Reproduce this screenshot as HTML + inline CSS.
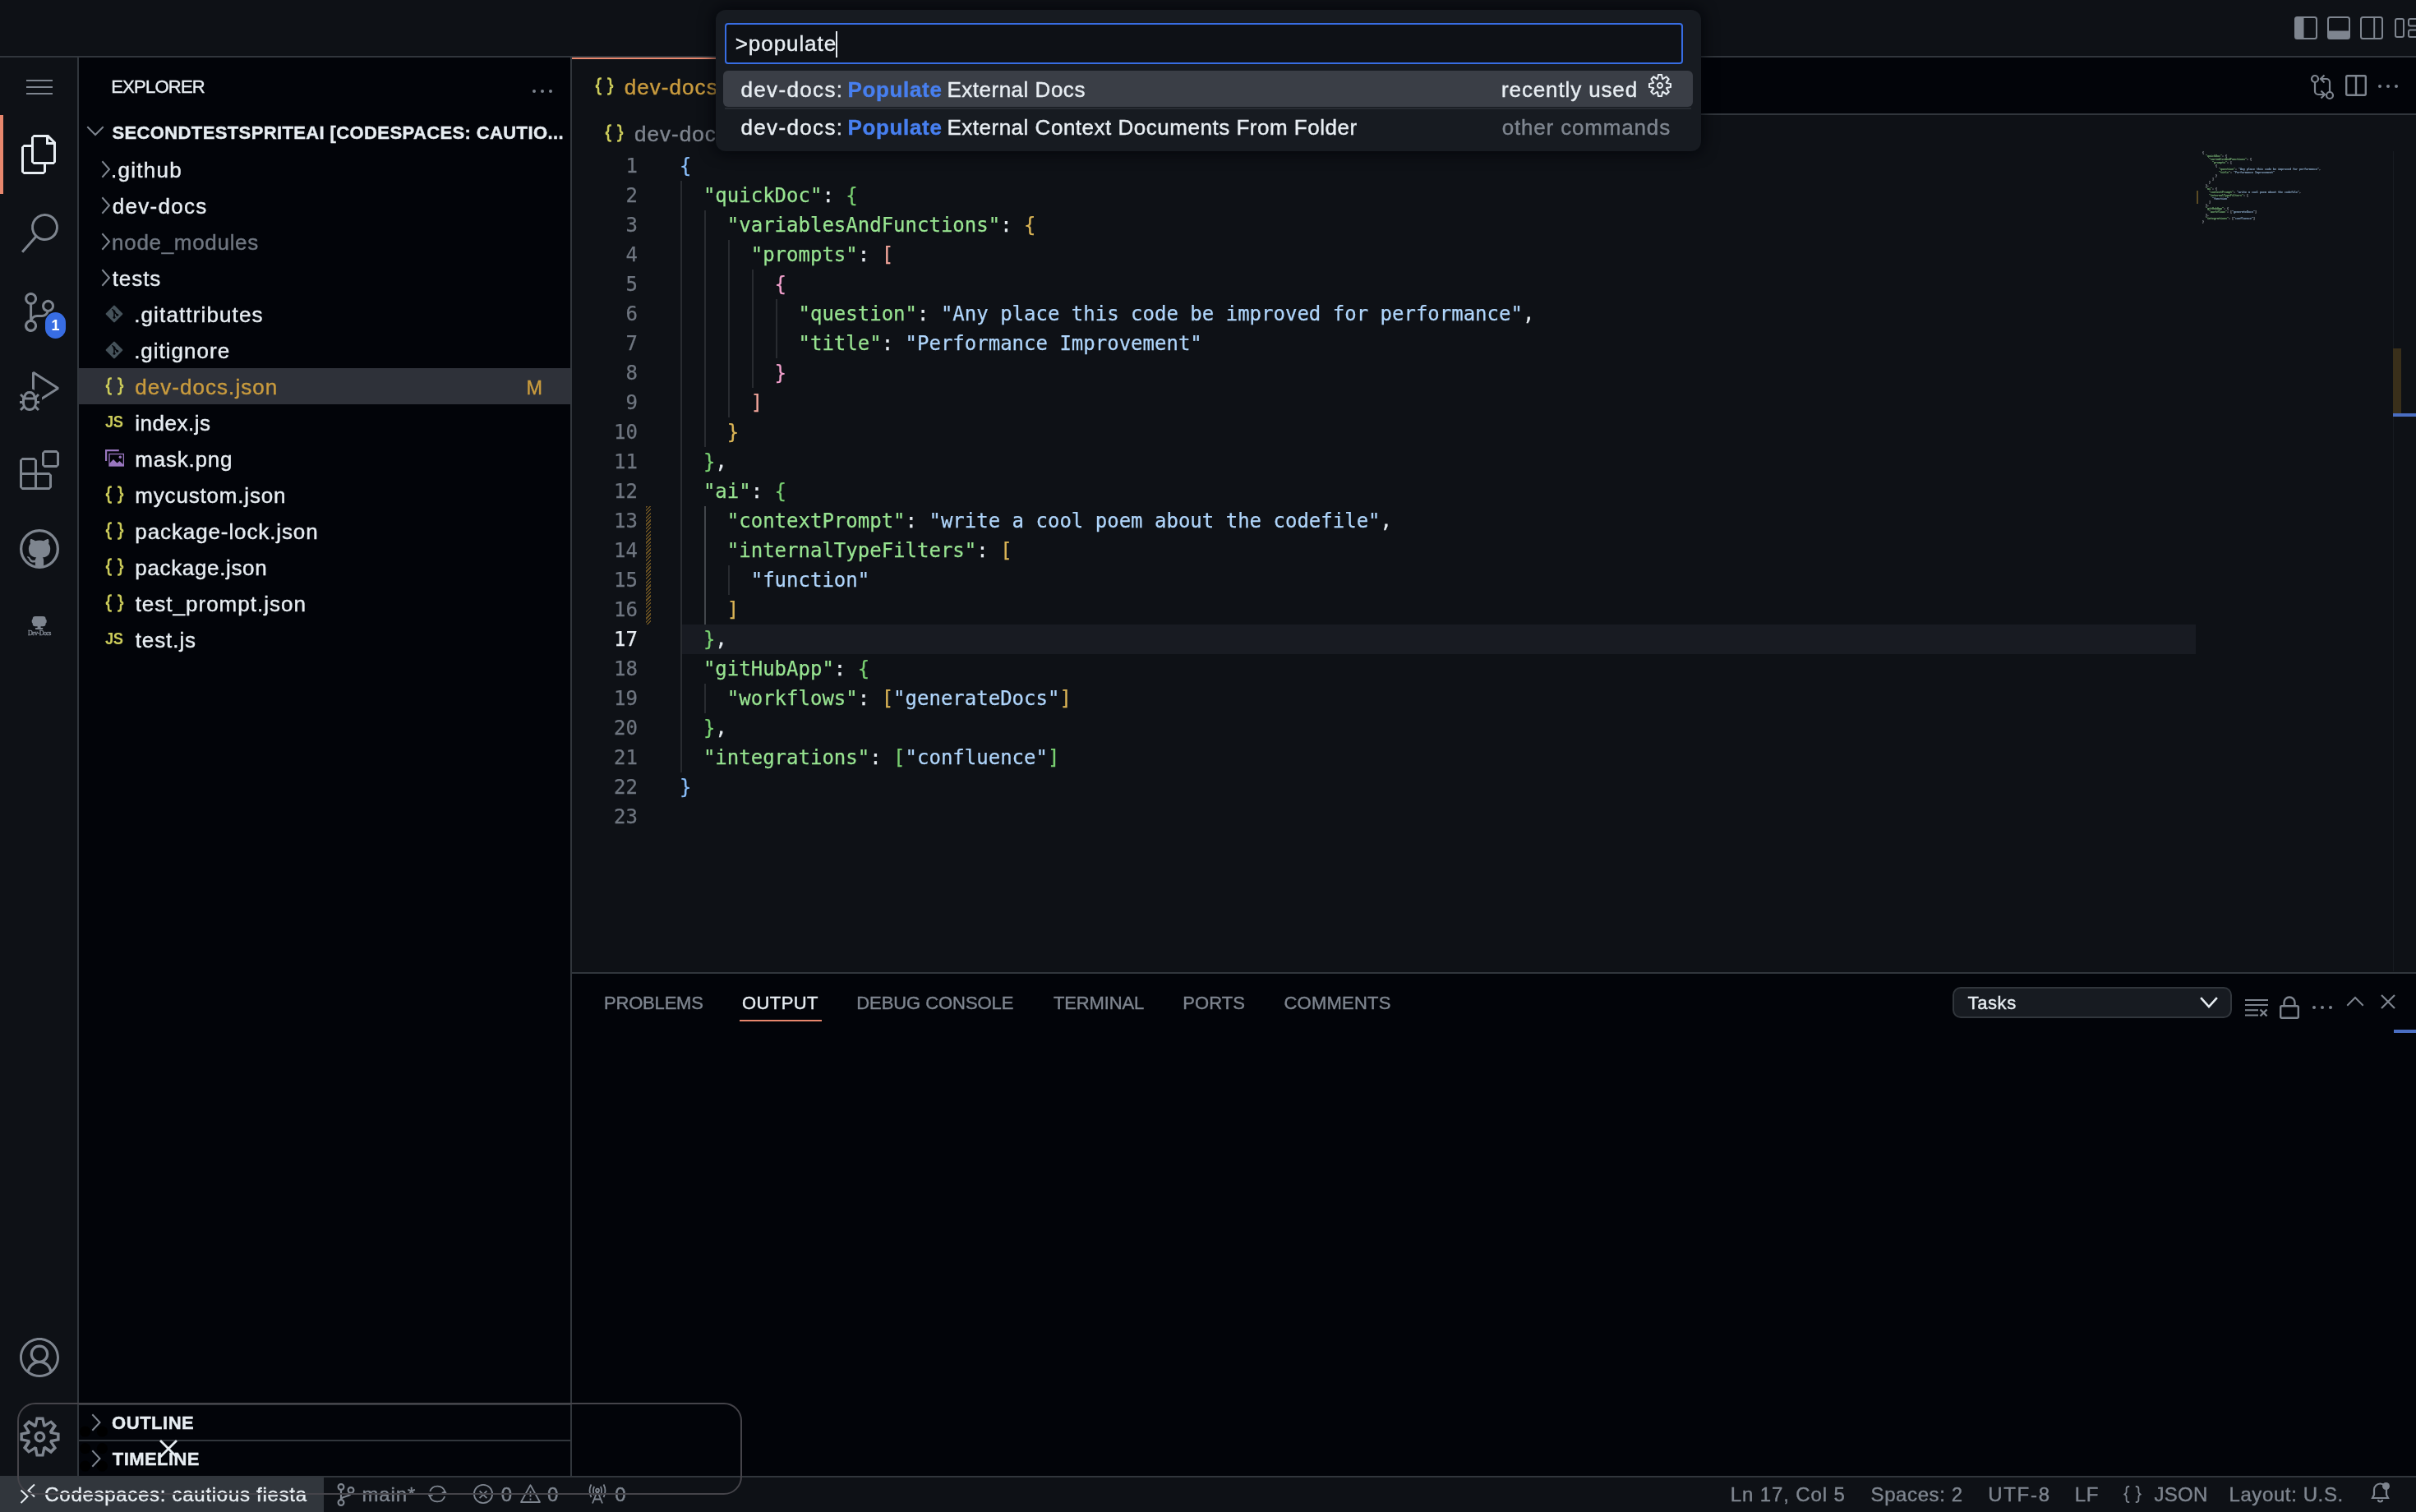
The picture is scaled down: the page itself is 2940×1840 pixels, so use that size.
<!DOCTYPE html>
<html lang="en"><head><meta charset="utf-8"><title>dev-docs.json - secondtestspriteai [Codespaces: cautious fiesta] - Visual Studio Code</title>
<style>
*{box-sizing:border-box;margin:0;padding:0}
html,body{width:2940px;height:1840px;overflow:hidden;background:#0e1116}
body{position:relative;font-family:"Liberation Sans",sans-serif;color:#e7edf2;font-size:26px;-webkit-font-smoothing:antialiased}
.abs{position:absolute}
#root{position:absolute;left:0;top:0;width:2940px;height:1840px;will-change:transform}
svg{display:block;overflow:visible}
#titlebar{left:0;top:0;width:2940px;height:70px;background:#0e1116;border-bottom:2px solid #31363c}
#activity{left:0;top:70px;width:96px;height:1726px;background:#0e1116;border-right:2px solid #31363c}
#sidebar{left:96px;top:70px;width:600px;height:1726px;background:#020409;border-right:2px solid #31363c}
#tabs{left:696px;top:70px;width:2244px;height:70px;background:#020409;border-bottom:2px solid #31363c}
#tab{left:696px;top:70px;width:330px;height:70px;background:#0e1116;border-top:2px solid #e8876d;border-right:2px solid #31363c}
#crumbs{left:696px;top:140px;width:2244px;height:44px;background:#0e1116}
#code{left:696px;top:184px;width:2244px;height:999px;background:#0e1116;font-family:"DejaVu Sans Mono","Liberation Mono",monospace;font-size:24px;line-height:36px;-webkit-text-stroke:0.25px}
#panel{left:696px;top:1183px;width:2244px;height:613px;background:#020409;border-top:2px solid #31363c}
#status{left:0;top:1796px;width:2940px;height:44px;background:#0e1116;border-top:2px solid #31363c;color:#7e858f;font-size:24px}
.row{position:absolute;left:0;width:598px;height:44px;line-height:44px;white-space:nowrap}
.row .lbl{position:absolute;top:0}
.ln{position:absolute;left:0;width:80px;text-align:right;color:#6f7680}
.cl{position:absolute;left:131px;white-space:pre}
.k{color:#98e491}.s{color:#afd5fb}.p{color:#e7edf2}
.b1{color:#89befa}.b2{color:#79d071}.b3{color:#dbb556}.b4{color:#f2a59b}.b5{color:#f1a0cc}
.mm .b1,.mm .b2,.mm .b3,.mm .b4,.mm .b5{color:#e7edf2}
.g{position:absolute;width:2px;background:#282b30}
.g.a{background:#42464b}
.st{position:absolute;top:0;height:42px;line-height:42px;white-space:nowrap}
.pt{position:absolute;top:0;height:70px;line-height:74px;font-size:22px;color:#7e858f;white-space:nowrap}
.t{white-space:nowrap;-webkit-text-stroke:0.4px}</style></head><body>
<div id="root">
<div id="titlebar" class="abs"><svg class="abs" style="left:2792px;top:20px" width="28" height="28" viewBox="0 0 28 28" ><rect x="1" y="1" width="26" height="26" rx="2.500" fill="none" stroke="#7e858f" stroke-width="2"/><path d="M1 3.500 a2.500 2.500 0 0 1 2.500 -2.500 H11.500 V27 H3.500 a2.500 2.500 0 0 1 -2.500 -2.500 Z" fill="#7e858f"/></svg><svg class="abs" style="left:2832px;top:20px" width="28" height="28" viewBox="0 0 28 28" ><rect x="1" y="1" width="26" height="26" rx="2.500" fill="none" stroke="#7e858f" stroke-width="2"/><path d="M1 17.500 H27 V24.500 a2.500 2.500 0 0 1 -2.500 2.500 H3.500 a2.500 2.500 0 0 1 -2.500 -2.500 Z" fill="#7e858f"/></svg><svg class="abs" style="left:2872px;top:20px" width="28" height="28" viewBox="0 0 28 28" ><rect x="1" y="1" width="26" height="26" rx="2.500" fill="none" stroke="#7e858f" stroke-width="2"/><rect x="16.200" y="1" width="2" height="26" fill="#7e858f"/></svg><svg class="abs" style="left:2914px;top:22px" width="30" height="24" viewBox="0 0 30 24" ><rect x="1" y="1" width="10" height="22" rx="2" fill="none" stroke="#7e858f" stroke-width="2"/><rect x="17" y="1" width="12" height="8.500" rx="2" fill="none" stroke="#7e858f" stroke-width="2"/><rect x="17" y="14.500" width="12" height="8.500" rx="2" fill="none" stroke="#7e858f" stroke-width="2"/></svg></div>
<div id="activity" class="abs"><div class="abs" style="left:32px;top:27px;width:32px;height:2px;background:#7e858f"></div><div class="abs" style="left:32px;top:35px;width:32px;height:2px;background:#7e858f"></div><div class="abs" style="left:32px;top:43px;width:32px;height:2px;background:#7e858f"></div><div class="abs" style="left:0;top:70px;width:4px;height:96px;background:#e8876d"></div><svg class="abs" style="left:24px;top:94px" width="48" height="48" viewBox="0 0 24 24" ><path fill="#e7edf2" d="M17.5 0h-9L7 1.5V6H2.5L1 7.5v15.07L2.5 24h12.07L16 22.57V18h4.7l1.3-1.43V4.5L17.5 0zm0 2.12l2.38 2.38H17.5V2.12zm-3 20.38h-12v-15H7v9.07L8.5 18h6v4.5zm6-6h-12v-15H16V6h4.5v10.5z"/></svg><svg class="abs" style="left:24px;top:190px" width="48" height="48" viewBox="0 0 24 24" ><path fill="#7e858f" d="M15.25 0a8.25 8.25 0 0 0-6.18 13.72L1 22.88l1.12 1 8.05-9.12A8.251 8.251 0 1 0 15.25.01V0zm0 15a6.75 6.75 0 1 1 0-13.5 6.75 6.75 0 0 1 0 13.5z"/></svg><svg class="abs" style="left:24px;top:286px" width="48" height="48" viewBox="0 0 24 24" ><path fill="#7e858f" d="M21.007 8.222A3.738 3.738 0 0 0 15.045 5.2a3.737 3.737 0 0 0 1.156 6.583 2.988 2.988 0 0 1-2.668 1.67h-2.99a4.456 4.456 0 0 0-2.989 1.165V7.4a3.737 3.737 0 1 0-1.494 0v9.117a3.776 3.776 0 1 0 1.816.099 2.99 2.99 0 0 1 2.668-1.667h2.99a4.484 4.484 0 0 0 4.223-3.039 3.736 3.736 0 0 0 3.25-3.687zM4.565 3.738a2.242 2.242 0 1 1 4.484 0 2.242 2.242 0 0 1-4.484 0zm4.484 16.441a2.242 2.242 0 1 1-4.484 0 2.242 2.242 0 0 1 4.484 0zm8.221-9.715a2.242 2.242 0 1 1 0-4.485 2.242 2.242 0 0 1 0 4.485z"/></svg><div class="abs" style="left:55px;top:310px;width:25px;height:32px;border-radius:13px;background:#386de3;color:#ffffff;font-size:18px;font-weight:bold;text-align:center;line-height:32px">1</div><svg class="abs" style="left:24px;top:382px" width="48" height="48" viewBox="0 0 24 24" ><path fill="#7e858f" d="M10.94 13.5l-1.32 1.32a3.73 3.73 0 0 0-7.24 0L1.06 13.5 0 14.56l1.72 1.72-.22.22V18H0v1.5h1.5v.08c.077.489.214.966.41 1.42L0 22.94 1.06 24l1.65-1.65A4.308 4.308 0 0 0 6 24a4.31 4.31 0 0 0 3.29-1.65L10.94 24 12 22.94 10.09 21c.198-.464.336-.951.41-1.45v-.1H12V18h-1.5v-1.5l-.22-.22L12 14.56l-1.06-1.06zM6 13.5a2.25 2.25 0 0 1 2.25 2.25h-4.5A2.25 2.25 0 0 1 6 13.5zm3 6a3.33 3.33 0 0 1-3 3 3.33 3.33 0 0 1-3-3v-2.25h6v2.25zm14.76-9.9v1.26L13.5 17.37V15.6l8.5-5.37L9 2v9.46a5.07 5.07 0 0 0-1.5-.72V.63L8.64 0l15.12 9.6z"/></svg><svg class="abs" style="left:24px;top:478px" width="48" height="48" viewBox="0 0 24 24" ><path fill="#7e858f" d="M13.5 1.5L15 0h7.5L24 1.5V9l-1.5 1.5H15L13.5 9V1.5zm1.5 0V9h7.5V1.5H15zM0 15V6l1.5-1.5H9L10.5 6v7.5H18l1.5 1.5v7.5L18 24H1.5L0 22.5V15zm9-1.5V6H1.5v7.5H9zM9 15H1.5v7.5H9V15zm1.5 7.5H18V15h-7.5v7.5z"/></svg><svg class="abs" style="left:24px;top:574px" width="48" height="48" viewBox="0 0 16 16" ><defs><mask id="ghm"><rect x="-1" y="-1" width="18" height="18" fill="#000000"/><circle cx="8" cy="8" r="7.6" fill="#ffffff"/><path d="M8 0C3.58 0 0 3.58 0 8c0 3.54 2.29 6.53 5.47 7.59.4.07.55-.17.55-.38 0-.19-.01-.82-.01-1.49-2.01.37-2.53-.49-2.69-.94-.09-.23-.48-.94-.82-1.13-.28-.15-.68-.52-.01-.53.63-.01 1.08.58 1.23.82.72 1.21 1.87.87 2.33.66.07-.52.28-.87.51-1.07-1.78-.2-3.64-.89-3.64-3.95 0-.87.31-1.59.82-2.15-.08-.2-.36-1.02.08-2.12 0 0 .67-.21 2.2.82.64-.18 1.32-.27 2-.27.68 0 1.36.09 2 .27 1.53-1.04 2.2-.82 2.2-.82.44 1.1.16 1.92.08 2.12.51.56.82 1.27.82 2.15 0 3.07-1.87 3.75-3.65 3.95.29.25.54.73.54 1.48 0 1.07-.01 1.93-.01 2.2 0 .21.15.46.55.38A8.013 8.013 0 0016 8c0-4.42-3.58-8-8-8z" fill="#000000"/></mask></defs><circle cx="8" cy="8" r="7.45" fill="none" stroke="#7e858f" stroke-width="1.1"/><g transform="translate(8 8.258) scale(0.86 0.905) translate(-8 -8)"><rect x="0" y="0" width="16" height="16" fill="#7e858f" mask="url(#ghm)"/></g></svg><svg class="abs" style="left:39px;top:680px" width="17.4" height="16" viewBox="0 0 17.400 16" ><rect x="0.700" y="0" width="15.900" height="12.200" rx="3.200" fill="#7e858f"/><rect x="-0.300" y="3.500" width="18" height="5" rx="1.500" fill="#7e858f"/><rect x="6.600" y="12" width="4" height="3" fill="#7e858f"/><rect x="4" y="14" width="9.200" height="2" rx="0.500" fill="#7e858f"/></svg><div class="abs t" style="left:33.90px;top:696.00px;height:9px;line-height:9px;font-size:8px;font-family:'Liberation Serif',serif;letter-spacing:-0.550px;color:#7e858f;">Dev-Docs</div><svg class="abs" style="left:24px;top:1558px" width="48" height="48" viewBox="0 0 16 16" ><path fill="#7e858f" d="M16 7.992C16 3.58 12.416 0 8 0S0 3.58 0 7.992c0 2.43 1.104 4.62 2.832 6.09.016.016.032.016.032.032.144.112.288.224.448.336.08.048.144.111.224.175A7.98 7.98 0 0 0 8.016 16a7.98 7.98 0 0 0 4.48-1.375c.08-.048.144-.111.224-.16.144-.111.304-.223.448-.335.016-.016.032-.016.032-.032 1.696-1.487 2.8-3.676 2.8-6.106zm-8 7.001c-1.504 0-2.88-.48-4.016-1.279.016-.128.048-.255.08-.383a4.17 4.17 0 0 1 .416-.991c.176-.304.384-.576.64-.816.24-.24.528-.463.816-.639.304-.176.624-.304.976-.4A4.15 4.15 0 0 1 8 10.342a4.185 4.185 0 0 1 2.928 1.166c.368.368.656.8.864 1.295.112.288.192.592.24.911A7.03 7.03 0 0 1 8 14.993zm-2.448-7.4a2.49 2.49 0 0 1-.208-1.024c0-.351.064-.703.208-1.023.144-.32.336-.607.576-.847.24-.24.528-.431.848-.575.32-.144.672-.208 1.024-.208.368 0 .704.064 1.024.208.32.144.608.336.848.575.24.24.432.528.576.847.144.32.208.672.208 1.023 0 .368-.064.704-.208 1.023a2.84 2.84 0 0 1-.576.848 2.84 2.84 0 0 1-.848.575 2.715 2.715 0 0 1-2.064 0 2.84 2.84 0 0 1-.848-.575 2.526 2.526 0 0 1-.56-.848zm7.424 5.306c0-.032-.016-.048-.016-.08a5.22 5.22 0 0 0-.688-1.406 4.883 4.883 0 0 0-1.088-1.135 5.207 5.207 0 0 0-1.04-.608 2.82 2.82 0 0 0 .464-.383 4.2 4.2 0 0 0 .624-.784 3.624 3.624 0 0 0 .528-1.934 3.71 3.71 0 0 0-.288-1.47 3.799 3.799 0 0 0-.816-1.199 3.845 3.845 0 0 0-1.2-.8 3.72 3.72 0 0 0-1.472-.287 3.72 3.72 0 0 0-1.472.288 3.631 3.631 0 0 0-1.2.815 3.84 3.84 0 0 0-.8 1.199 3.71 3.71 0 0 0-.288 1.47c0 .352.048.688.144 1.007.096.336.224.64.4.927.16.288.384.544.624.784.144.144.304.271.48.383a5.12 5.12 0 0 0-1.04.624c-.416.32-.784.703-1.088 1.119a4.999 4.999 0 0 0-.688 1.406c-.16.032-.16.064-.16.08C1.776 11.636.992 9.91.992 7.992.992 4.14 4.144.991 8 .991s7.008 3.149 7.008 7.001a6.96 6.96 0 0 1-2.032 4.907z"/></svg><svg class="abs" style="left:20.5px;top:1650.5px" width="55" height="55" viewBox="0 0 16 16" ><path fill="#7e858f" d="M9.1 4.4L8.6 2H7.4l-.5 2.4-.7.3-2-1.3-.9.8 1.3 2-.2.7-2.4.5v1.2l2.4.5.3.8-1.3 2 .8.8 2-1.3.8.3.4 2.3h1.2l.5-2.4.8-.3 2 1.3.8-.8-1.3-2 .3-.8 2.3-.4V7.4l-2.4-.5-.3-.8 1.3-2-.8-.8-2 1.3-.7-.2zM9.4 1l.5 2.4L12 2.1l2 2-1.4 2.1 2.4.4v2.8l-2.4.5L14 12l-2 2-2.1-1.4-.5 2.4H6.6l-.5-2.4L4 13.9l-2-2 1.4-2.1L1 9.4V6.6l2.4-.5L2.1 4l2-2 2.1 1.4.4-2.4h2.8zm.6 7c0 1.1-.9 2-2 2s-2-.9-2-2 .9-2 2-2 2 .9 2 2zM8 9c.6 0 1-.4 1-1s-.4-1-1-1-1 .4-1 1 .4 1 1 1z"/></svg></div>
<div id="sidebar" class="abs"><div class="abs t" style="left:39.20px;top:23.00px;height:25px;line-height:25px;font-size:22px;letter-spacing:-0.750px;color:#e7edf2;">EXPLORER</div><div class="abs" style="left:552px;top:39px;width:4px;height:4px;border-radius:2px;background:#7e858f"></div><div class="abs" style="left:562px;top:39px;width:4px;height:4px;border-radius:2px;background:#7e858f"></div><div class="abs" style="left:572px;top:39px;width:4px;height:4px;border-radius:2px;background:#7e858f"></div><svg class="abs" style="left:10px;top:84px" width="20" height="11" viewBox="0 0 20 11" ><polyline points="1,1 10.0,10 19,1" fill="none" stroke="#7e858f" stroke-width="2" stroke-linecap="square" stroke-linejoin="miter"/></svg><div class="abs t" style="left:40.40px;top:79.00px;height:25px;line-height:25px;font-size:22px;font-weight:bold;letter-spacing:0.384px;color:#e7edf2;">SECONDTESTSPRITEAI [CODESPACES: CAUTIO...</div><svg class="abs" style="left:28px;top:126px" width="10" height="20" viewBox="0 0 10 20" ><polyline points="1,1 9,10.0 1,19" fill="none" stroke="#7e858f" stroke-width="2" stroke-linecap="square" stroke-linejoin="miter"/></svg><div class="abs t" style="left:38.95px;top:122.00px;height:30px;line-height:30px;font-size:26px;letter-spacing:1.292px;color:#e7edf2;">.github</div><svg class="abs" style="left:28px;top:170px" width="10" height="20" viewBox="0 0 10 20" ><polyline points="1,1 9,10.0 1,19" fill="none" stroke="#7e858f" stroke-width="2" stroke-linecap="square" stroke-linejoin="miter"/></svg><div class="abs t" style="left:40.75px;top:166.00px;height:30px;line-height:30px;font-size:26px;letter-spacing:1.279px;color:#e7edf2;">dev-docs</div><svg class="abs" style="left:28px;top:214px" width="10" height="20" viewBox="0 0 10 20" ><polyline points="1,1 9,10.0 1,19" fill="none" stroke="#7e858f" stroke-width="2" stroke-linecap="square" stroke-linejoin="miter"/></svg><div class="abs t" style="left:40.10px;top:210.00px;height:30px;line-height:30px;font-size:26px;letter-spacing:0.691px;color:#6f7680;">node_modules</div><svg class="abs" style="left:28px;top:258px" width="10" height="20" viewBox="0 0 10 20" ><polyline points="1,1 9,10.0 1,19" fill="none" stroke="#7e858f" stroke-width="2" stroke-linecap="square" stroke-linejoin="miter"/></svg><div class="abs t" style="left:40.65px;top:254.00px;height:30px;line-height:30px;font-size:26px;letter-spacing:0.938px;color:#e7edf2;">tests</div><svg class="abs" style="left:32px;top:301px" width="22" height="22" viewBox="0 0 22 22" ><rect x="3.3" y="3.3" width="15.4" height="15.4" rx="1.2" transform="rotate(45 11 11)" fill="#45525a"/><path d="M8.5 5.2 L11 7.7 V15.2 M11 8.6 L14.6 12.1" stroke="#020409" stroke-width="1.5" fill="none"/><circle cx="11" cy="8" r="1.5" fill="#020409"/><circle cx="11" cy="15.3" r="1.5" fill="#020409"/><circle cx="14.8" cy="12.2" r="1.5" fill="#020409"/></svg><div class="abs t" style="left:67.15px;top:298.00px;height:30px;line-height:30px;font-size:26px;letter-spacing:1.138px;color:#e7edf2;">.gitattributes</div><svg class="abs" style="left:32px;top:345px" width="22" height="22" viewBox="0 0 22 22" ><rect x="3.3" y="3.3" width="15.4" height="15.4" rx="1.2" transform="rotate(45 11 11)" fill="#45525a"/><path d="M8.5 5.2 L11 7.7 V15.2 M11 8.6 L14.6 12.1" stroke="#020409" stroke-width="1.5" fill="none"/><circle cx="11" cy="8" r="1.5" fill="#020409"/><circle cx="11" cy="15.3" r="1.5" fill="#020409"/><circle cx="14.8" cy="12.2" r="1.5" fill="#020409"/></svg><div class="abs t" style="left:67.15px;top:342.00px;height:30px;line-height:30px;font-size:26px;letter-spacing:1.000px;color:#e7edf2;">.gitignore</div><div class="abs" style="left:0;top:378px;width:598px;height:44px;background:#2e3139"></div><svg class="abs" style="left:33px;top:389px" width="21" height="22" viewBox="0 0 22 22" preserveAspectRatio="none"><path d="M7.2 1.5 H6 C3.9 1.5 3.2 2.6 3.2 4.4 V7.6 C3.2 9.2 2.6 10 1 10.2 V11.8 C2.6 12 3.2 12.8 3.2 14.4 V17.6 C3.2 19.4 3.9 20.5 6 20.5 H7.2 M14.8 1.5 H16 C18.100 1.5 18.8 2.6 18.8 4.4 V7.6 C18.8 9.2 19.4 10 21 10.2 V11.8 C19.4 12 18.8 12.800 18.8 14.4 V17.6 C18.8 19.4 18.100 20.5 16 20.5 H14.8" fill="none" stroke="#cbcb5a" stroke-width="2.6" stroke-linejoin="round"/></svg><div class="abs t" style="left:68.15px;top:386.00px;height:30px;line-height:30px;font-size:26px;letter-spacing:1.058px;color:#c99b3e;">dev-docs.json</div><div class="abs t" style="left:544.40px;top:389.00px;height:26px;line-height:26px;font-size:23.4px;letter-spacing:0.000px;color:#c99b3e;">M</div><div class="abs" style="left:32px;top:432px;width:24px;height:22px;line-height:22px;font-size:19.5px;font-weight:bold;letter-spacing:-0.5px;transform-origin:0 0;transform:scaleX(0.94);color:#cbcb5a;font-family:'Liberation Sans',sans-serif">JS</div><div class="abs t" style="left:68.30px;top:430.00px;height:30px;line-height:30px;font-size:26px;letter-spacing:0.521px;color:#e7edf2;">index.js</div><svg class="abs" style="left:32px;top:477px" width="23" height="21" viewBox="0 0 23 21" ><path d="M1.100 14 V1.100 H16.800" fill="none" stroke="#9976bf" stroke-width="2.200"/><rect x="5" y="5.500" width="17.400" height="14.500" fill="none" stroke="#9976bf" stroke-width="1.300"/><path d="M5 20 V17 L10 12 L14.500 16.500 L17.500 14 L22.400 18.500 V20 Z" fill="#9976bf"/><circle cx="18.300" cy="9.300" r="1.700" fill="#9976bf"/></svg><div class="abs t" style="left:68.30px;top:474.00px;height:30px;line-height:30px;font-size:26px;letter-spacing:0.779px;color:#e7edf2;">mask.png</div><svg class="abs" style="left:33px;top:521px" width="21" height="22" viewBox="0 0 22 22" preserveAspectRatio="none"><path d="M7.2 1.5 H6 C3.9 1.5 3.2 2.6 3.2 4.4 V7.6 C3.2 9.2 2.6 10 1 10.2 V11.8 C2.6 12 3.2 12.8 3.2 14.4 V17.6 C3.2 19.4 3.9 20.5 6 20.5 H7.2 M14.8 1.5 H16 C18.100 1.5 18.8 2.6 18.8 4.4 V7.6 C18.8 9.2 19.4 10 21 10.2 V11.8 C19.4 12 18.8 12.800 18.8 14.4 V17.6 C18.8 19.4 18.100 20.5 16 20.5 H14.8" fill="none" stroke="#cbcb5a" stroke-width="2.6" stroke-linejoin="round"/></svg><div class="abs t" style="left:68.30px;top:518.00px;height:30px;line-height:30px;font-size:26px;letter-spacing:0.817px;color:#e7edf2;">mycustom.json</div><svg class="abs" style="left:33px;top:565px" width="21" height="22" viewBox="0 0 22 22" preserveAspectRatio="none"><path d="M7.2 1.5 H6 C3.9 1.5 3.2 2.6 3.2 4.4 V7.6 C3.2 9.2 2.6 10 1 10.2 V11.8 C2.6 12 3.2 12.8 3.2 14.4 V17.6 C3.2 19.4 3.9 20.5 6 20.5 H7.2 M14.8 1.5 H16 C18.100 1.5 18.8 2.6 18.8 4.4 V7.6 C18.8 9.2 19.4 10 21 10.2 V11.8 C19.4 12 18.8 12.800 18.8 14.4 V17.6 C18.8 19.4 18.100 20.5 16 20.5 H14.8" fill="none" stroke="#cbcb5a" stroke-width="2.6" stroke-linejoin="round"/></svg><div class="abs t" style="left:68.35px;top:562.00px;height:30px;line-height:30px;font-size:26px;letter-spacing:0.888px;color:#e7edf2;">package-lock.json</div><svg class="abs" style="left:33px;top:609px" width="21" height="22" viewBox="0 0 22 22" preserveAspectRatio="none"><path d="M7.2 1.5 H6 C3.9 1.5 3.2 2.6 3.2 4.4 V7.6 C3.2 9.2 2.6 10 1 10.2 V11.8 C2.6 12 3.2 12.8 3.2 14.4 V17.6 C3.2 19.4 3.9 20.5 6 20.5 H7.2 M14.8 1.5 H16 C18.100 1.5 18.8 2.6 18.8 4.4 V7.6 C18.8 9.2 19.4 10 21 10.2 V11.8 C19.4 12 18.8 12.800 18.8 14.4 V17.6 C18.8 19.4 18.100 20.5 16 20.5 H14.8" fill="none" stroke="#cbcb5a" stroke-width="2.6" stroke-linejoin="round"/></svg><div class="abs t" style="left:68.35px;top:606.00px;height:30px;line-height:30px;font-size:26px;letter-spacing:0.645px;color:#e7edf2;">package.json</div><svg class="abs" style="left:33px;top:653px" width="21" height="22" viewBox="0 0 22 22" preserveAspectRatio="none"><path d="M7.2 1.5 H6 C3.9 1.5 3.2 2.6 3.2 4.4 V7.6 C3.2 9.2 2.6 10 1 10.2 V11.8 C2.6 12 3.2 12.8 3.2 14.4 V17.6 C3.2 19.4 3.9 20.5 6 20.5 H7.2 M14.8 1.5 H16 C18.100 1.5 18.8 2.6 18.8 4.4 V7.6 C18.8 9.2 19.4 10 21 10.2 V11.8 C19.4 12 18.8 12.800 18.8 14.4 V17.6 C18.8 19.4 18.100 20.5 16 20.5 H14.8" fill="none" stroke="#cbcb5a" stroke-width="2.6" stroke-linejoin="round"/></svg><div class="abs t" style="left:68.65px;top:650.00px;height:30px;line-height:30px;font-size:26px;letter-spacing:1.000px;color:#e7edf2;">test_prompt.json</div><div class="abs" style="left:32px;top:696px;width:24px;height:22px;line-height:22px;font-size:19.5px;font-weight:bold;letter-spacing:-0.5px;transform-origin:0 0;transform:scaleX(0.94);color:#cbcb5a;font-family:'Liberation Sans',sans-serif">JS</div><div class="abs t" style="left:68.65px;top:694.00px;height:30px;line-height:30px;font-size:26px;letter-spacing:0.925px;color:#e7edf2;">test.js</div><svg class="abs" style="left:0px;top:1638px" width="36" height="84" viewBox="0 0 36 84" ><circle cx="7.6" cy="34" r="6.600" fill="#000000"/><circle cx="7.6" cy="54.6" r="6.600" fill="#000000"/><circle cx="7.6" cy="76.1" r="6.600" fill="#000000"/><circle cx="28.4" cy="34" r="6.600" fill="#000000"/><circle cx="28.4" cy="54.6" r="6.600" fill="#000000"/><circle cx="28.4" cy="76.1" r="6.600" fill="#000000"/></svg><div class="abs" style="left:0;top:1638px;width:598px;height:44px;border-top:2px solid #31363c"></div><svg class="abs" style="left:15.5px;top:1651px" width="10.5" height="20" viewBox="0 0 10.5 20" ><polyline points="1,1 9.5,10.0 1,19" fill="none" stroke="#7e858f" stroke-width="2" stroke-linecap="square" stroke-linejoin="miter"/></svg><div class="abs t" style="left:40.10px;top:1649.00px;height:25px;line-height:25px;font-size:22px;font-weight:bold;letter-spacing:0.525px;color:#e7edf2;">OUTLINE</div><div class="abs" style="left:0;top:1682px;width:598px;height:44px;border-top:2px solid #31363c"></div><svg class="abs" style="left:15.5px;top:1695px" width="10.5" height="20" viewBox="0 0 10.5 20" ><polyline points="1,1 9.5,10.0 1,19" fill="none" stroke="#7e858f" stroke-width="2" stroke-linecap="square" stroke-linejoin="miter"/></svg><div class="abs t" style="left:40.80px;top:1692.80px;height:25px;line-height:25px;font-size:22px;font-weight:bold;letter-spacing:0.436px;color:#e7edf2;">TIMELINE</div></div>
<div id="tabs" class="abs"><svg class="abs" style="left:2116px;top:21px" width="28" height="30" viewBox="0 0 28 30" ><g fill="none" stroke="#7e858f" stroke-width="2.2"><circle cx="5" cy="5" r="4"/><circle cx="23" cy="25" r="4"/><path d="M5 8.6 V20 a4 4 0 0 0 4 4 H16 M12.5 19.500 L17 24 L12.5 28.500"/><path d="M23 21.400 V9 a4 4 0 0 0 -4 -4 H13 M16.500 0.500 L12 5 L16.5 9.500"/></g></svg><svg class="abs" style="left:2158px;top:21px" width="26" height="26" viewBox="0 0 26 26" ><rect x="1.2" y="1.2" width="23.6" height="23.6" rx="1.500" fill="none" stroke="#7e858f" stroke-width="2.4"/><rect x="11.800" y="1" width="2.4" height="24" fill="#7e858f"/></svg><div class="abs" style="left:2198px;top:33px;width:4px;height:4px;border-radius:2px;background:#7e858f"></div><div class="abs" style="left:2208px;top:33px;width:4px;height:4px;border-radius:2px;background:#7e858f"></div><div class="abs" style="left:2218px;top:33px;width:4px;height:4px;border-radius:2px;background:#7e858f"></div></div>
<div id="tab" class="abs"><svg class="abs" style="left:29px;top:22px" width="21" height="22" viewBox="0 0 22 22" preserveAspectRatio="none"><path d="M7.2 1.5 H6 C3.9 1.5 3.2 2.6 3.2 4.4 V7.6 C3.2 9.2 2.6 10 1 10.2 V11.8 C2.6 12 3.2 12.8 3.2 14.4 V17.6 C3.2 19.4 3.9 20.5 6 20.5 H7.2 M14.8 1.5 H16 C18.100 1.5 18.8 2.6 18.8 4.4 V7.6 C18.8 9.2 19.4 10 21 10.2 V11.8 C19.4 12 18.8 12.800 18.8 14.4 V17.6 C18.8 19.4 18.100 20.5 16 20.5 H14.8" fill="none" stroke="#cbcb5a" stroke-width="2.6" stroke-linejoin="round"/></svg><div class="abs t" style="left:63.75px;top:18.80px;height:30px;line-height:30px;font-size:26px;letter-spacing:1.058px;color:#c99b3e;">dev-docs.json</div></div>
<div id="crumbs" class="abs"><svg class="abs" style="left:41px;top:10.5px" width="21" height="22" viewBox="0 0 22 22" preserveAspectRatio="none"><path d="M7.2 1.5 H6 C3.9 1.5 3.2 2.6 3.2 4.4 V7.6 C3.2 9.2 2.6 10 1 10.2 V11.8 C2.6 12 3.2 12.8 3.2 14.4 V17.6 C3.2 19.4 3.9 20.5 6 20.5 H7.2 M14.8 1.5 H16 C18.100 1.5 18.8 2.6 18.8 4.4 V7.6 C18.8 9.2 19.4 10 21 10.2 V11.8 C19.4 12 18.8 12.800 18.8 14.4 V17.6 C18.8 19.4 18.100 20.5 16 20.5 H14.8" fill="none" stroke="#cbcb5a" stroke-width="2.6" stroke-linejoin="round"/></svg><div class="abs t" style="left:75.95px;top:8.00px;height:30px;line-height:30px;font-size:26px;letter-spacing:1.058px;color:#7e858f;">dev-docs.json</div></div>
<div id="code" class="abs"><div class="abs" style="left:132px;top:576px;width:1844px;height:36px;background:#181b22"></div>
<div class="abs" style="left:90px;top:432px;width:6px;height:144px;background:repeating-linear-gradient(135deg,#674f21 0 1.55px,transparent 1.55px 3.1px)"></div>
<div class="ln" style="top:0px">1</div>
<div class="cl" style="top:0px"><span class="b1">{</span></div>
<div class="ln" style="top:36px">2</div>
<div class="g" style="left:132.0px;top:36px;height:36px"></div>
<div class="cl" style="top:36px">  <span class="k">"quickDoc"</span><span class="p">: </span><span class="b2">{</span></div>
<div class="ln" style="top:72px">3</div>
<div class="g" style="left:132.0px;top:72px;height:36px"></div>
<div class="g" style="left:160.9px;top:72px;height:36px"></div>
<div class="cl" style="top:72px">    <span class="k">"variablesAndFunctions"</span><span class="p">: </span><span class="b3">{</span></div>
<div class="ln" style="top:108px">4</div>
<div class="g" style="left:132.0px;top:108px;height:36px"></div>
<div class="g" style="left:160.9px;top:108px;height:36px"></div>
<div class="g" style="left:189.8px;top:108px;height:36px"></div>
<div class="cl" style="top:108px">      <span class="k">"prompts"</span><span class="p">: </span><span class="b4">[</span></div>
<div class="ln" style="top:144px">5</div>
<div class="g" style="left:132.0px;top:144px;height:36px"></div>
<div class="g" style="left:160.9px;top:144px;height:36px"></div>
<div class="g" style="left:189.8px;top:144px;height:36px"></div>
<div class="g" style="left:218.7px;top:144px;height:36px"></div>
<div class="cl" style="top:144px">        <span class="b5">{</span></div>
<div class="ln" style="top:180px">6</div>
<div class="g" style="left:132.0px;top:180px;height:36px"></div>
<div class="g" style="left:160.9px;top:180px;height:36px"></div>
<div class="g" style="left:189.8px;top:180px;height:36px"></div>
<div class="g" style="left:218.7px;top:180px;height:36px"></div>
<div class="g" style="left:247.6px;top:180px;height:36px"></div>
<div class="cl" style="top:180px">          <span class="k">"question"</span><span class="p">: </span><span class="s">"Any place this code be improved for performance"</span><span class="p">,</span></div>
<div class="ln" style="top:216px">7</div>
<div class="g" style="left:132.0px;top:216px;height:36px"></div>
<div class="g" style="left:160.9px;top:216px;height:36px"></div>
<div class="g" style="left:189.8px;top:216px;height:36px"></div>
<div class="g" style="left:218.7px;top:216px;height:36px"></div>
<div class="g" style="left:247.6px;top:216px;height:36px"></div>
<div class="cl" style="top:216px">          <span class="k">"title"</span><span class="p">: </span><span class="s">"Performance Improvement"</span></div>
<div class="ln" style="top:252px">8</div>
<div class="g" style="left:132.0px;top:252px;height:36px"></div>
<div class="g" style="left:160.9px;top:252px;height:36px"></div>
<div class="g" style="left:189.8px;top:252px;height:36px"></div>
<div class="g" style="left:218.7px;top:252px;height:36px"></div>
<div class="cl" style="top:252px">        <span class="b5">}</span></div>
<div class="ln" style="top:288px">9</div>
<div class="g" style="left:132.0px;top:288px;height:36px"></div>
<div class="g" style="left:160.9px;top:288px;height:36px"></div>
<div class="g" style="left:189.8px;top:288px;height:36px"></div>
<div class="cl" style="top:288px">      <span class="b4">]</span></div>
<div class="ln" style="top:324px">10</div>
<div class="g" style="left:132.0px;top:324px;height:36px"></div>
<div class="g" style="left:160.9px;top:324px;height:36px"></div>
<div class="cl" style="top:324px">    <span class="b3">}</span></div>
<div class="ln" style="top:360px">11</div>
<div class="g" style="left:132.0px;top:360px;height:36px"></div>
<div class="cl" style="top:360px">  <span class="b2">}</span><span class="p">,</span></div>
<div class="ln" style="top:396px">12</div>
<div class="g" style="left:132.0px;top:396px;height:36px"></div>
<div class="cl" style="top:396px">  <span class="k">"ai"</span><span class="p">: </span><span class="b2">{</span></div>
<div class="ln" style="top:432px">13</div>
<div class="g" style="left:132.0px;top:432px;height:36px"></div>
<div class="g a" style="left:160.9px;top:432px;height:36px"></div>
<div class="cl" style="top:432px">    <span class="k">"contextPrompt"</span><span class="p">: </span><span class="s">"write a cool poem about the codefile"</span><span class="p">,</span></div>
<div class="ln" style="top:468px">14</div>
<div class="g" style="left:132.0px;top:468px;height:36px"></div>
<div class="g a" style="left:160.9px;top:468px;height:36px"></div>
<div class="cl" style="top:468px">    <span class="k">"internalTypeFilters"</span><span class="p">: </span><span class="b3">[</span></div>
<div class="ln" style="top:504px">15</div>
<div class="g" style="left:132.0px;top:504px;height:36px"></div>
<div class="g a" style="left:160.9px;top:504px;height:36px"></div>
<div class="g" style="left:189.8px;top:504px;height:36px"></div>
<div class="cl" style="top:504px">      <span class="s">"function"</span></div>
<div class="ln" style="top:540px">16</div>
<div class="g" style="left:132.0px;top:540px;height:36px"></div>
<div class="g a" style="left:160.9px;top:540px;height:36px"></div>
<div class="cl" style="top:540px">    <span class="b3">]</span></div>
<div class="ln" style="top:576px;color:#e7edf2">17</div>
<div class="g" style="left:132.0px;top:576px;height:36px"></div>
<div class="cl" style="top:576px">  <span class="b2">}</span><span class="p">,</span></div>
<div class="ln" style="top:612px">18</div>
<div class="g" style="left:132.0px;top:612px;height:36px"></div>
<div class="cl" style="top:612px">  <span class="k">"gitHubApp"</span><span class="p">: </span><span class="b2">{</span></div>
<div class="ln" style="top:648px">19</div>
<div class="g" style="left:132.0px;top:648px;height:36px"></div>
<div class="g" style="left:160.9px;top:648px;height:36px"></div>
<div class="cl" style="top:648px">    <span class="k">"workflows"</span><span class="p">: </span><span class="b3">[</span><span class="s">"generateDocs"</span><span class="b3">]</span></div>
<div class="ln" style="top:684px">20</div>
<div class="g" style="left:132.0px;top:684px;height:36px"></div>
<div class="cl" style="top:684px">  <span class="b2">}</span><span class="p">,</span></div>
<div class="ln" style="top:720px">21</div>
<div class="g" style="left:132.0px;top:720px;height:36px"></div>
<div class="cl" style="top:720px">  <span class="k">"integrations"</span><span class="p">: </span><span class="b2">[</span><span class="s">"confluence"</span><span class="b2">]</span></div>
<div class="ln" style="top:756px">22</div>
<div class="cl" style="top:756px"><span class="b1">}</span></div>
<div class="ln" style="top:792px">23</div><div class="abs mm" style="left:1984px;top:0;width:1700px;height:828px;transform-origin:0 0;transform:scale(0.13841,0.11111);opacity:0.75;font-weight:bold"><div class="cl" style="left:0;top:0px"><span class="b1">{</span></div><div class="cl" style="left:0;top:36px">  <span class="k">"quickDoc"</span><span class="p">: </span><span class="b2">{</span></div><div class="cl" style="left:0;top:72px">    <span class="k">"variablesAndFunctions"</span><span class="p">: </span><span class="b3">{</span></div><div class="cl" style="left:0;top:108px">      <span class="k">"prompts"</span><span class="p">: </span><span class="b4">[</span></div><div class="cl" style="left:0;top:144px">        <span class="b5">{</span></div><div class="cl" style="left:0;top:180px">          <span class="k">"question"</span><span class="p">: </span><span class="s">"Any place this code be improved for performance"</span><span class="p">,</span></div><div class="cl" style="left:0;top:216px">          <span class="k">"title"</span><span class="p">: </span><span class="s">"Performance Improvement"</span></div><div class="cl" style="left:0;top:252px">        <span class="b5">}</span></div><div class="cl" style="left:0;top:288px">      <span class="b4">]</span></div><div class="cl" style="left:0;top:324px">    <span class="b3">}</span></div><div class="cl" style="left:0;top:360px">  <span class="b2">}</span><span class="p">,</span></div><div class="cl" style="left:0;top:396px">  <span class="k">"ai"</span><span class="p">: </span><span class="b2">{</span></div><div class="cl" style="left:0;top:432px">    <span class="k">"contextPrompt"</span><span class="p">: </span><span class="s">"write a cool poem about the codefile"</span><span class="p">,</span></div><div class="cl" style="left:0;top:468px">    <span class="k">"internalTypeFilters"</span><span class="p">: </span><span class="b3">[</span></div><div class="cl" style="left:0;top:504px">      <span class="s">"function"</span></div><div class="cl" style="left:0;top:540px">    <span class="b3">]</span></div><div class="cl" style="left:0;top:576px">  <span class="b2">}</span><span class="p">,</span></div><div class="cl" style="left:0;top:612px">  <span class="k">"gitHubApp"</span><span class="p">: </span><span class="b2">{</span></div><div class="cl" style="left:0;top:648px">    <span class="k">"workflows"</span><span class="p">: </span><span class="b3">[</span><span class="s">"generateDocs"</span><span class="b3">]</span></div><div class="cl" style="left:0;top:684px">  <span class="b2">}</span><span class="p">,</span></div><div class="cl" style="left:0;top:720px">  <span class="k">"integrations"</span><span class="p">: </span><span class="b2">[</span><span class="s">"confluence"</span><span class="b2">]</span></div><div class="cl" style="left:0;top:756px"><span class="b1">}</span></div></div><div class="abs" style="left:2216px;top:0;width:28px;height:998px;border-left:1px solid #171b21"></div><div class="abs" style="left:2216px;top:240px;width:10px;height:79px;background:#392f1a"></div><div class="abs" style="left:2216px;top:319px;width:28px;height:4px;background:#4a6ec3"></div><div class="abs" style="left:1977px;top:48px;width:2px;height:16px;background:#5b4b24"></div></div>
<div id="panel" class="abs"><div class="abs t" style="left:38.95px;top:23.00px;height:25px;line-height:25px;font-size:22px;letter-spacing:-0.179px;color:#7e858f;">PROBLEMS</div><div class="abs t" style="left:207.00px;top:23.00px;height:25px;line-height:25px;font-size:22px;letter-spacing:0.410px;color:#e7edf2;">OUTPUT</div><div class="abs t" style="left:346.20px;top:23.00px;height:25px;line-height:25px;font-size:22px;letter-spacing:-0.058px;color:#7e858f;">DEBUG CONSOLE</div><div class="abs t" style="left:586.05px;top:23.00px;height:25px;line-height:25px;font-size:22px;letter-spacing:-0.157px;color:#7e858f;">TERMINAL</div><div class="abs t" style="left:743.20px;top:23.00px;height:25px;line-height:25px;font-size:22px;letter-spacing:0.100px;color:#7e858f;">PORTS</div><div class="abs t" style="left:866.40px;top:23.00px;height:25px;line-height:25px;font-size:22px;letter-spacing:0.250px;color:#7e858f;">COMMENTS</div><div class="abs" style="left:204px;top:56px;width:100px;height:2px;background:#e8876d"></div><div class="abs" style="left:1680px;top:16px;width:340px;height:38px;border:2px solid #31363c;border-radius:10px;background:#171b21"></div><div class="abs t" style="left:1698.55px;top:23.00px;height:25px;line-height:25px;font-size:22px;letter-spacing:0.613px;color:#e7edf2;">Tasks</div><svg class="abs" style="left:1982px;top:29px" width="20" height="12" viewBox="0 0 20 12" ><polyline points="1,1 10.0,11 19,1" fill="none" stroke="#e7edf2" stroke-width="2.6" stroke-linecap="square" stroke-linejoin="miter"/></svg><svg class="abs" style="left:2036px;top:31px" width="28" height="22" viewBox="0 0 28 22" ><g stroke="#7e858f" stroke-width="2" fill="none"><path d="M0 1 H28 M0 7 H28 M0 13.200 H16 M0 19.400 H16"/><path d="M18.500 12.500 L26.500 20.500 M26.500 12.500 L18.500 20.500" stroke-width="2.400"/></g></svg><svg class="abs" style="left:2078px;top:28px" width="24" height="27" viewBox="0 0 24 27" ><g stroke="#7e858f" stroke-width="2.4" fill="none"><rect x="1.2" y="11.2" width="21.6" height="14.6" rx="1.500"/><path d="M5.500 11 V7 a6.500 6.500 0 0 1 13 0 V11"/></g></svg><div class="abs" style="left:2118px;top:39px;width:4px;height:4px;border-radius:2px;background:#7e858f"></div><div class="abs" style="left:2128px;top:39px;width:4px;height:4px;border-radius:2px;background:#7e858f"></div><div class="abs" style="left:2138px;top:39px;width:4px;height:4px;border-radius:2px;background:#7e858f"></div><svg class="abs" style="left:2160px;top:28px" width="20" height="11" viewBox="0 0 20 11" ><polyline points="1,10 10.0,1 19,10" fill="none" stroke="#7e858f" stroke-width="2" stroke-linecap="square" stroke-linejoin="miter"/></svg><svg class="abs" style="left:2201px;top:25px" width="18" height="18" viewBox="0 0 18 18" ><path d="M1 1 L17 17 M17 1 L1 17" stroke="#7e858f" stroke-width="2.2" fill="none"/></svg><div class="abs" style="left:2217px;top:68px;width:28px;height:4px;background:#4a6ec3"></div></div>
<div id="status" class="abs"><div class="abs" style="left:0;top:-2px;width:394px;height:44px;background:#31363c"></div><svg class="abs" style="left:25px;top:8px" width="18" height="26" viewBox="0 0 18 26" ><path d="M0.5 7.5 L8.5 15 L0.5 23 M17 0.500 L9.500 7.800 L17 15.500" stroke="#e7edf2" stroke-width="2" fill="none"/></svg><div class="abs t" style="left:54.30px;top:7.00px;height:27px;line-height:27px;font-size:24px;letter-spacing:0.712px;color:#e7edf2;">Codespaces: cautious fiesta</div><svg class="abs" style="left:410px;top:7px" width="22" height="28" viewBox="0 0 22 28" ><g stroke="#7e858f" stroke-width="2.2" fill="none"><circle cx="5" cy="4.500" r="3.4"/><circle cx="5" cy="23.500" r="3.4"/><circle cx="17" cy="8.500" r="3.4"/><path d="M5 8 V20 M17 12 c0 5 -12 3 -12 8"/></g></svg><div class="abs t" style="left:440.45px;top:7.00px;height:27px;line-height:27px;font-size:24px;letter-spacing:0.887px;color:#7e858f;">main*</div><svg class="abs" style="left:520px;top:8px" width="26" height="24" viewBox="0 0 26 24" ><g stroke="#7e858f" stroke-width="1.800" fill="none"><path d="M3.200 9 A9.600 9.600 0 0 1 21.500 9.500 M21.200 15 A9.600 9.600 0 0 1 2.900 14.500"/><path d="M17.800 10.800 L21.600 9.400 L23.600 12.800 M0.800 11.200 L2.800 14.600 L6.600 13.200"/></g></svg><svg class="abs" style="left:576px;top:8px" width="24" height="24" viewBox="0 0 24 24" ><g stroke="#7e858f" stroke-width="1.800" fill="none"><circle cx="12" cy="12" r="11.100"/><path d="M7.600 8.400 L16.400 17.200 M16.400 8.400 L7.600 17.200"/></g></svg><div class="abs t" style="left:609.80px;top:7.00px;height:27px;line-height:27px;font-size:24px;letter-spacing:0.000px;color:#7e858f;">0</div><svg class="abs" style="left:632.5px;top:8px" width="25" height="23" viewBox="0 0 25 23" ><g stroke="#7e858f" stroke-width="1.800" fill="none" stroke-linejoin="round"><path d="M12.500 1.200 L24 22 H1 Z"/><path d="M12.500 8.500 V15.500 M12.500 17.600 V19.800"/></g></svg><div class="abs t" style="left:666.10px;top:7.00px;height:27px;line-height:27px;font-size:24px;letter-spacing:0.000px;color:#7e858f;">0</div><svg class="abs" style="left:715.4px;top:7px" width="24" height="26" viewBox="0 0 24 26" ><g stroke="#7e858f" stroke-width="1.800" fill="none"><path d="M4.500 1.500 Q0.500 9 4.500 17 M19.500 1.500 Q23.500 9 19.500 17 M8.200 4 Q5.500 9 8.200 14.500 M15.800 4 Q18.500 9 15.800 14.500"/><circle cx="12" cy="8.700" r="2"/><path d="M11.400 11 L6 24.500 M12.600 11 L18 24.500 M8 19.500 H16"/></g></svg><div class="abs t" style="left:748.20px;top:7.00px;height:27px;line-height:27px;font-size:24px;letter-spacing:0.000px;color:#7e858f;">0</div><div class="abs t" style="left:2105.85px;top:7.00px;height:27px;line-height:27px;font-size:24px;letter-spacing:0.868px;color:#7e858f;">Ln 17, Col 5</div><div class="abs t" style="left:2276.55px;top:7.00px;height:27px;line-height:27px;font-size:24px;letter-spacing:0.600px;color:#7e858f;">Spaces: 2</div><div class="abs t" style="left:2419.15px;top:7.00px;height:27px;line-height:27px;font-size:24px;letter-spacing:1.712px;color:#7e858f;">UTF-8</div><div class="abs t" style="left:2524.85px;top:7.00px;height:27px;line-height:27px;font-size:24px;letter-spacing:0.500px;color:#7e858f;">LF</div><div class="abs t" style="left:2621.45px;top:7.00px;height:27px;line-height:27px;font-size:24px;letter-spacing:0.317px;color:#7e858f;">JSON</div><div class="abs t" style="left:2712.45px;top:7.00px;height:27px;line-height:27px;font-size:24px;letter-spacing:0.605px;color:#7e858f;">Layout: U.S.</div><svg class="abs" style="left:2584px;top:9.5px" width="22" height="21" viewBox="0 0 22 21" ><path d="M7.2 1 H6.4 C4.4 1 3.6 2 3.6 3.800 V7.600 C3.600 9.200 2.800 10 1 10.500 C2.800 11 3.600 11.800 3.600 13.400 V17.200 C3.600 19 4.400 20 6.400 20 H7.200 M14.800 1 H15.600 C17.600 1 18.400 2 18.400 3.800 V7.600 C18.400 9.200 19.200 10 21 10.500 C19.200 11 18.400 11.800 18.400 13.400 V17.200 C18.400 19 17.600 20 15.600 20 H14.800" fill="none" stroke="#7e858f" stroke-width="1.800" stroke-linejoin="round"/></svg><svg class="abs" style="left:2885px;top:6px" width="24" height="26" viewBox="0 0 24 26" ><g stroke="#7e858f" stroke-width="2.2" fill="none"><path d="M2 19 H21 L19 15 V9 a7.500 7.500 0 0 0 -15 0 V15 Z M9 21 a2.500 2.500 0 0 0 5 0"/></g><circle cx="18.500" cy="4.500" r="4.500" fill="#7e858f"/></svg></div>
<div class="abs" style="left:870.5px;top:12px;width:1199.5px;height:172px;background:#171b21;border-radius:12px;box-shadow:0 0 18px 2px rgba(2,4,9,0.8)"><div class="abs" style="left:11.5px;top:16px;width:1166px;height:50px;border:2px solid #386de3;border-radius:4px;background:#0e1116"></div><div class="abs t" style="left:24.25px;top:26.00px;height:30px;line-height:30px;font-size:26px;letter-spacing:0.925px;color:#e7edf2;">&gt;populate</div><div class="abs" style="left:146.5px;top:26px;width:2px;height:32px;background:#e7edf2"></div><div class="abs" style="left:9.5px;top:74px;width:1180px;height:44px;border-radius:6px;background:#3a3e46"></div><div class="abs" style="left:11.5px;top:119px;width:1176px;height:2px;background:#272b32"></div><div class="abs t" style="left:30.95px;top:81.50px;height:30px;line-height:30px;font-size:26px;letter-spacing:1.350px;color:#e7edf2;">dev-docs:</div><div class="abs t" style="left:161.00px;top:81.50px;height:30px;line-height:30px;font-size:26px;font-weight:bold;letter-spacing:0.650px;color:#477fef;">Populate</div><div class="abs t" style="left:30.95px;top:127.50px;height:30px;line-height:30px;font-size:26px;letter-spacing:1.350px;color:#e7edf2;">dev-docs:</div><div class="abs t" style="left:161.00px;top:127.50px;height:30px;line-height:30px;font-size:26px;font-weight:bold;letter-spacing:0.650px;color:#477fef;">Populate</div><div class="abs t" style="left:281.90px;top:81.50px;height:30px;line-height:30px;font-size:26px;letter-spacing:0.513px;color:#e7edf2;">External Docs</div><div class="abs t" style="left:281.90px;top:127.50px;height:30px;line-height:30px;font-size:26px;letter-spacing:0.514px;color:#e7edf2;">External Context Documents From Folder</div><div class="abs t" style="left:956.55px;top:81.50px;height:30px;line-height:30px;font-size:26px;letter-spacing:0.871px;color:#e7edf2;">recently used</div><div class="abs t" style="left:957.20px;top:127.50px;height:30px;line-height:30px;font-size:26px;letter-spacing:0.831px;color:#7e858f;">other commands</div><svg class="abs" style="left:1133.5px;top:76px" width="32" height="32" viewBox="0 0 16 16" ><path fill="#e7edf2" d="M9.1 4.4L8.6 2H7.4l-.5 2.4-.7.3-2-1.3-.9.8 1.3 2-.2.7-2.4.5v1.2l2.4.5.3.8-1.3 2 .8.8 2-1.3.8.3.4 2.3h1.2l.5-2.4.8-.3 2 1.3.8-.8-1.3-2 .3-.8 2.3-.4V7.4l-2.4-.5-.3-.8 1.3-2-.8-.8-2 1.3-.7-.2zM9.4 1l.5 2.4L12 2.1l2 2-1.4 2.1 2.4.4v2.8l-2.4.5L14 12l-2 2-2.1-1.4-.5 2.4H6.6l-.5-2.4L4 13.9l-2-2 1.4-2.1L1 9.4V6.6l2.4-.5L2.1 4l2-2 2.1 1.4.4-2.4h2.8zm.6 7c0 1.1-.9 2-2 2s-2-.9-2-2 .9-2 2-2 2 .9 2 2zM8 9c.6 0 1-.4 1-1s-.4-1-1-1-1 .4-1 1 .4 1 1 1z"/></svg></div><div class="abs" style="left:21px;top:1707px;width:882px;height:112px;border:2px solid #45444a;border-radius:22px"></div><svg class="abs" style="left:194px;top:1752px" width="22" height="22" viewBox="0 0 22 22" ><path d="M1 1 L21 21 M21 1 L1 21" stroke="#e7edf2" stroke-width="2.800" fill="none"/></svg>
</div>
</body></html>
